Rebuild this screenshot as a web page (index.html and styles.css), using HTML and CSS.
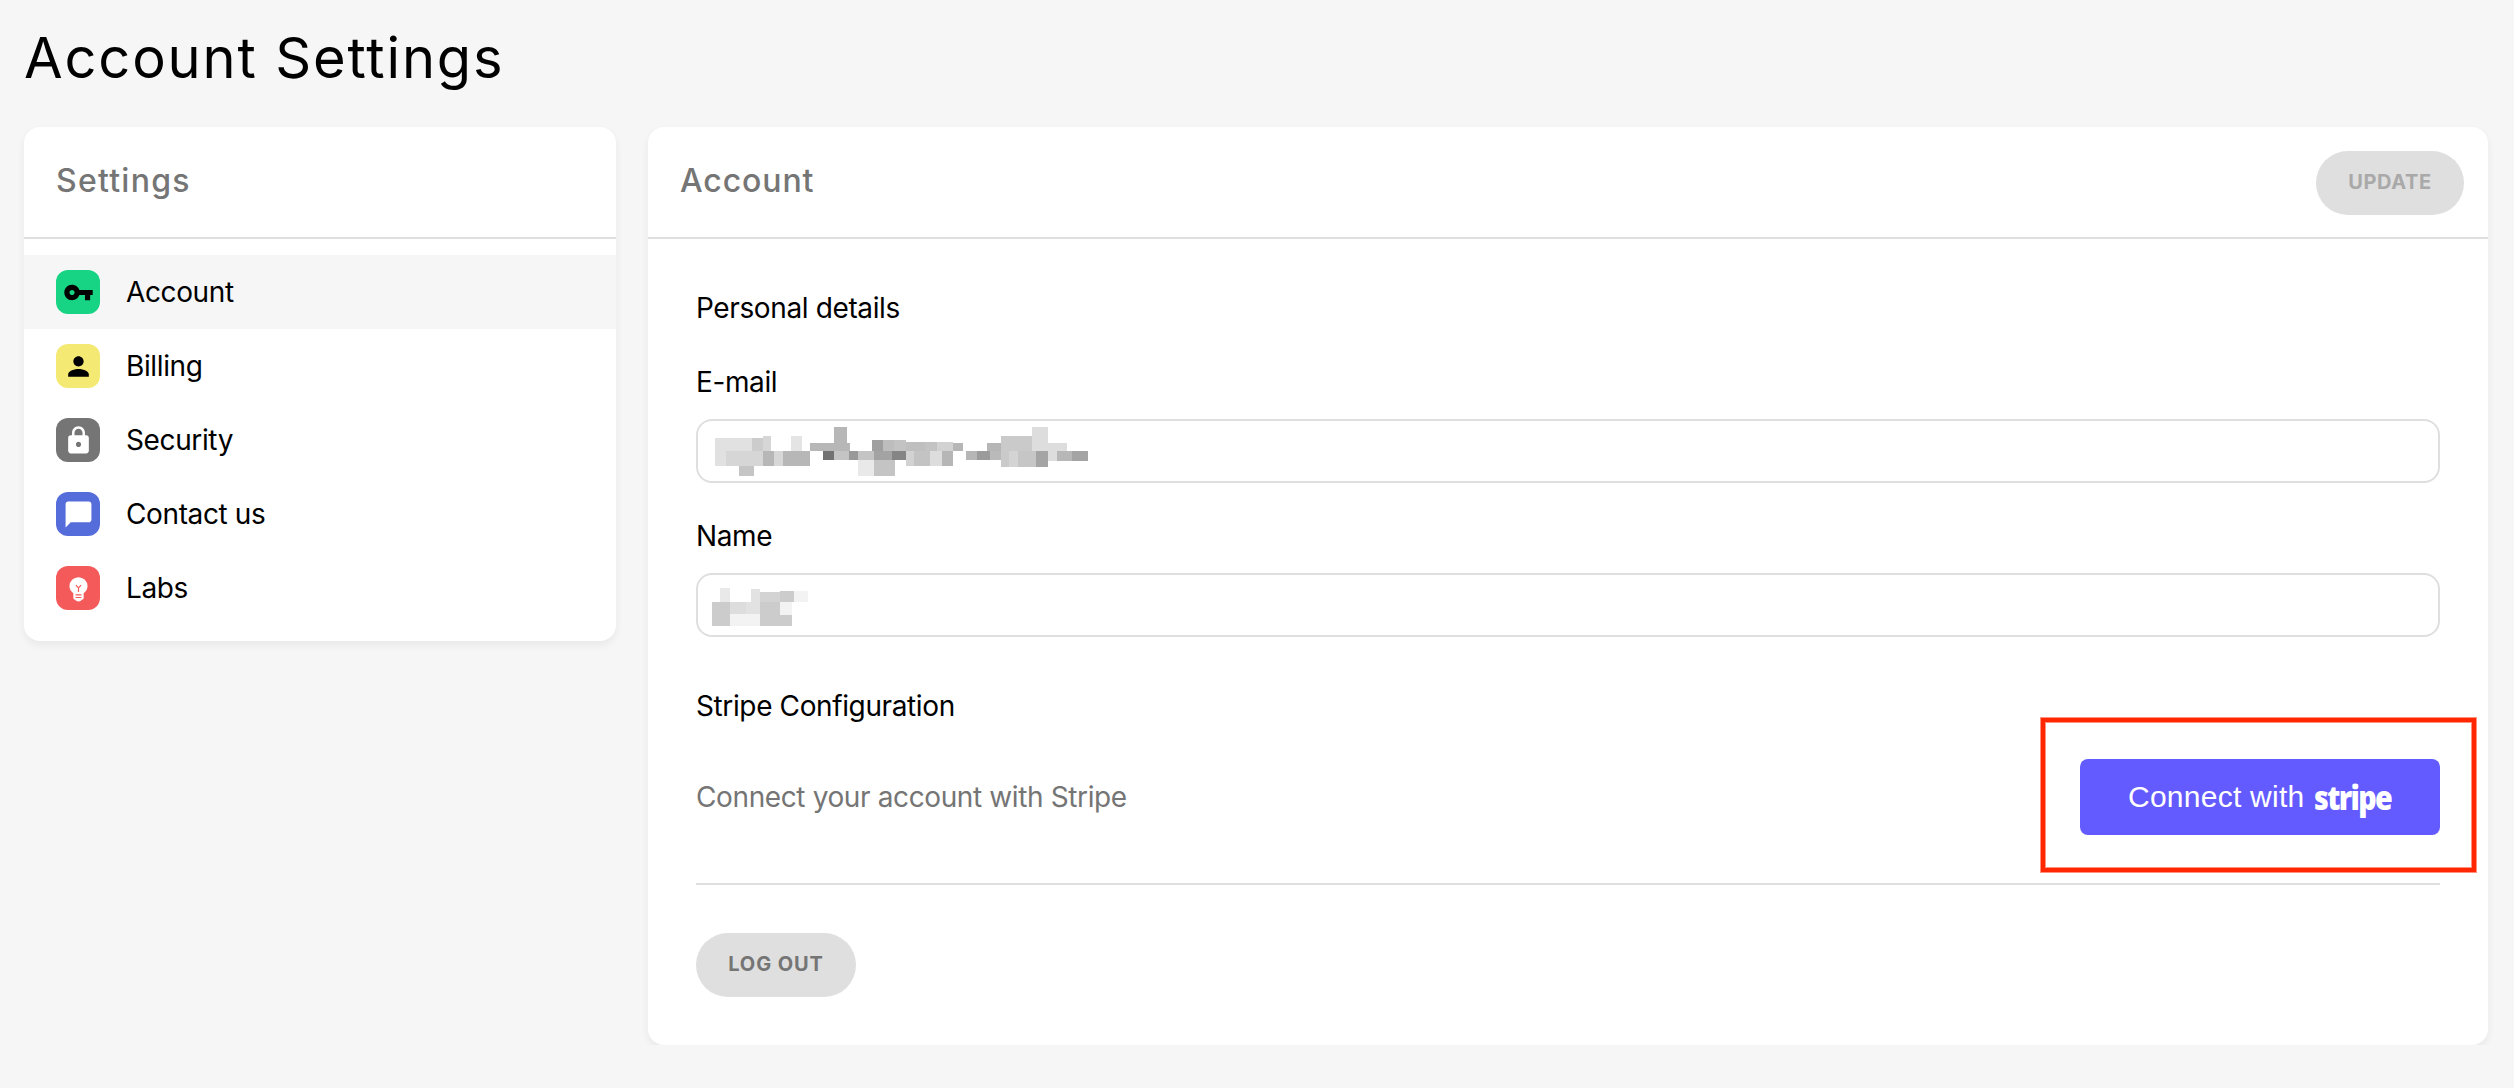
FILE: index.html
```html
<!DOCTYPE html>
<html lang="en">
<head>
<meta charset="utf-8">
<title>Account Settings</title>
<link rel="stylesheet" href="styles.css">
</head>
<body>
<h1 class="page-title">Account Settings</h1>
<main class="columns">
  <nav class="card sidebar">
    <header class="card-header"><h2 class="card-title settings-title">Settings</h2></header>
    <ul class="menu">
      <li class="menu-item active"><span class="tile green"><svg viewBox="0 0 24 24"><path d="M12.650 10C11.830 7.670 9.610 6 7 6c-3.310 0-6 2.690-6 6s2.690 6 6 6c2.610 0 4.830-1.670 5.650-4H17v4h4v-4h2v-4H12.650zM7 14c-1.100 0-2-.9-2-2s.9-2 2-2 2 .9 2 2-.9 2-2 2z"/></svg></span><span>Account</span></li>
      <li class="menu-item"><span class="tile yellow"><svg viewBox="0 0 24 24"><path d="M12 12c2.210 0 4-1.790 4-4s-1.790-4-4-4-4 1.790-4 4 1.790 4 4 4zm0 2c-2.670 0-8 1.340-8 4v2h16v-2c0-2.660-5.330-4-8-4z"/></svg></span><span>Billing</span></li>
      <li class="menu-item"><span class="tile gray"><svg viewBox="0 0 24 24"><path d="M18 8h-1V6c0-2.760-2.240-5-5-5S7 3.240 7 6v2H6c-1.100 0-2 .9-2 2v10c0 1.100.9 2 2 2h12c1.100 0 2-.9 2-2V10c0-1.100-.9-2-2-2zm-6 9c-1.100 0-2-.9-2-2s.9-2 2-2 2 .9 2 2-.9 2-2 2zm3.100-9H8.900V6c0-1.710 1.390-3.100 3.100-3.100s3.100 1.390 3.100 3.100v2z"/></svg></span><span>Security</span></li>
      <li class="menu-item"><span class="tile blue"><svg viewBox="0 0 24 24"><path d="M20 2H4c-1.100 0-1.990.9-1.990 2L2 22l4-4h14c1.100 0 2-.9 2-2V4c0-1.100-.9-2-2-2z"/></svg></span><span>Contact us</span></li>
      <li class="menu-item"><span class="tile red"><svg viewBox="0 0 24 24"><path d="M12 3.200a7 7 0 0 0-7 7c0 2.300 1.300 3.900 3 5.500v3.500c0 .9.600 1.500 1.500 1.600.4.900 1.300 1.300 2.500 1.300s2.100-.4 2.500-1.300c.9-.1 1.500-.7 1.500-1.600v-3.500c1.700-1.600 3-3.200 3-5.500a7 7 0 0 0-7-7z"/><path class="filament" d="M10 9.300l2 2.300 2-2.300M12 11.600v3.200M9.700 16.900h4.600M9.700 19h4.600"/></svg></span><span>Labs</span></li>
    </ul>
  </nav>
  <section class="card content">
    <header class="card-header">
      <h2 class="card-title">Account</h2>
      <button class="pill update" disabled><span>UPDATE</span></button>
    </header>
    <div class="form">
      <h3 class="section-title">Personal details</h3>
      <div class="field">
        <span class="label">E-mail</span>
        <div class="input">
          <svg class="mosaic" width="400" height="60" viewBox="54 63 1200 180">
            <path fill="#e1e1e1" d="M105 114h111v39h-78v45h-33z"/>
            <path fill="#cccccc" d="M216 114h33v39h-33z"/>
            <path fill="#d6d6d6" d="M249 108h24v45h-24zM138 153h111v45H138z"/>
            <path fill="#e4e4e4" d="M333 108h33v45h-33z"/>
            <path fill="#b7b7b7" d="M249 153h33v45h-33zM309 153h81v45h-81z"/>
            <path fill="#d7d7d7" d="M282 153h27v45h-27z"/>
            <path fill="#c5c5c5" d="M177 198h45v30h-45z"/>
            <path fill="#b7b7b7" d="M390 129h72V81h39v48h9v24H390z"/>
            <path fill="#727272" d="M429 153h33v27h-33z"/>
            <path fill="#c4c4c4" d="M462 153h45v27h-45zM534 153h48v27h-48z"/>
            <path fill="#999999" d="M507 153h27v27h-27z"/>
            <path fill="#e9e9e9" d="M534 180h48v48h-48z"/>
            <path fill="#c4c4c4" d="M582 180h63v48h-63z"/>
            <path fill="#9f9f9f" d="M576 120h33v33h-33z"/>
            <path fill="#bdbdbd" d="M609 120h33v33h-33z"/>
            <path fill="#c3c3c3" d="M642 120h36v33h-36zM735 126h36v27h-36zM702 153h48v45h-48z"/>
            <path fill="#a3a3a3" d="M582 153h54v27h-54z"/>
            <path fill="#858585" d="M636 153h42v27h-42z"/>
            <path fill="#bfbfbf" d="M678 126h57v27h-57z"/>
            <path fill="#d2d2d2" d="M771 126h48v27h-48zM678 153h24v45h-24z"/>
            <path fill="#dddddd" d="M750 153h36v45h-36z"/>
            <path fill="#b6b6b6" d="M786 153h33v45h-33zM819 129h30v24h-30zM858 153h33v27h-33zM921 129h42v24h-42z"/>
            <path fill="#9b9b9b" d="M891 153h39v27h-39z"/>
            <path fill="#bababa" d="M930 153h33v27h-33z"/>
            <path fill="#cacaca" d="M963 108h93v45h-69v48h-24z"/>
            <path fill="#d4d4d4" d="M987 153h27v48h-27z"/>
            <path fill="#c6c6c6" d="M1014 153h54v48h-54z"/>
            <path fill="#dddddd" d="M1056 81h48v72h-48zM1104 129h57v24h-57zM1104 153h27v30h-27z"/>
            <path fill="#a4a4a4" d="M1068 153h36v48h-36zM1176 153h48v30h-48z"/>
            <path fill="#b7b7b7" d="M1131 153h45v30h-45z"/>
          </svg>
        </div>
      </div>
      <div class="field">
        <span class="label">Name</span>
        <div class="input">
          <svg class="mosaic" width="140" height="60" viewBox="54 45 420 180">
            <path fill="#e9e9e9" d="M120 84h30v42h-30z"/>
            <path fill="#e2e2e2" d="M213 87h27v39h-27zM198 126h42v36h-42z"/>
            <path fill="#d3d3d3" d="M240 96h60v30h-60z"/>
            <path fill="#cccccc" d="M96 126h54v72H96zM300 93h42v33h-42zM240 126h60v39h36v33h-96z"/>
            <path fill="#dddddd" d="M150 126h48v36h-48z"/>
            <path fill="#f3f3f3" d="M150 162h90v36h-90zM342 93h42v33h-42zM300 126h36v39h-36z"/>
          </svg>
        </div>
      </div>
      <h3 class="section-title stripe-title">Stripe Configuration</h3>
      <div class="stripe-row">
        <span class="hint">Connect your account with Stripe</span>
        <div class="connect-wrap">
          <button class="connect"><span class="connect-text">Connect with</span><span class="stripe-word">stripe</span></button>
          <div class="highlight"></div>
        </div>
      </div>
      <hr class="divider">
      <button class="pill logout"><span>LOG OUT</span></button>
    </div>
  </section>
</main>
</body>
</html>
```
FILE: styles.css
```css
* { box-sizing: border-box; }
body { margin: 0; background: #f6f6f6; color: #000; font-family: Inter, "Liberation Sans", sans-serif; font-size: 28px; line-height: 42px; letter-spacing: -.38px; }
h1, h2, h3, ul { margin: 0; padding: 0; font-weight: 400; font-size: inherit; }
button { border: 0; padding: 0; font-family: inherit; }
.page-title { padding: 18px 24px 0; height: 127px; font-size: 56px; line-height: 80px; letter-spacing: 1.85px; }
.columns { display: flex; align-items: flex-start; gap: 32px; padding: 0 26px 0 24px; }
.card { background: #fff; border-radius: 16px; box-shadow: 0 4px 8px rgba(0, 0, 0, .06); }
.sidebar { width: 592px; padding-bottom: 16px; }
.content { flex: 1; }
.card-header { display: flex; align-items: center; justify-content: space-between; height: 112px; padding: 0 24px 0 32px; border-bottom: 2px solid #dfdfdf; }
.card-title { color: #757575; font-size: 32px; font-weight: 500; line-height: 40px; padding-bottom: 2px; letter-spacing: .9px; }
.settings-title { letter-spacing: 1.25px; }
.menu { list-style: none; padding-top: 16px; }
.menu-item { display: flex; align-items: center; gap: 26px; height: 74px; padding-left: 32px; }
.active { background: #f6f6f6; }
.tile { display: flex; align-items: center; justify-content: center; width: 44px; height: 44px; border-radius: 12px; }
.tile svg { width: 31px; height: 31px; }
.green { background: #16d483; }
.yellow { background: #f4e973; }
.gray { background: #757575; fill: #fff; }
.blue { background: #556cdb; fill: #fff; }
.red { background: #f45a5a; fill: #fff; }
.filament { fill: none; stroke: #f45a5a; stroke-width: .9; }
.pill { display: flex; align-items: center; justify-content: center; height: 64px; border-radius: 32px; background: #dfdfdf; color: #757575; font-size: 20px; font-weight: 700; line-height: 24px; padding-bottom: 3px; }
.update { width: 148px; color: #a9a9a9; margin-top: 2px; letter-spacing: .6px; }
.logout { width: 160px; letter-spacing: .9px; }
.form { padding: 48px; }
.field { display: flex; flex-direction: column; gap: 16px; margin-top: 32px; }
.input { height: 64px; border: 2px solid #dfdfdf; border-radius: 16px; overflow: hidden; }
.mosaic { display: block; shape-rendering: crispEdges; }
.stripe-title { margin-top: 48px; }
.stripe-row { display: flex; align-items: center; justify-content: space-between; margin-top: 32px; }
.hint { color: #757575; }
.connect-wrap { position: relative; }
.connect { display: flex; align-items: center; width: 360px; height: 76px; padding-left: 48px; border-radius: 8px; background: #635bff; color: #fff; }
.connect-text { width: 186px; text-align: left; font-family: "Liberation Sans", sans-serif; font-size: 30px; letter-spacing: .25px; white-space: nowrap; }
.stripe-word { font-family: "Open Sans", sans-serif; font-size: 34px; font-weight: 800; letter-spacing: -2px; transform: scaleX(.845); transform-origin: left; }
.highlight { position: absolute; top: -41px; right: -36px; width: 435px; height: 154px; border: 4px solid #ff2600; box-shadow: 0 0 0 1px rgba(255, 38, 0, .5), inset 0 0 0 1px rgba(255, 38, 0, .5); pointer-events: none; }
.divider { height: 2px; border: 0; margin: 48px 0; background: #dfdfdf; }
```
